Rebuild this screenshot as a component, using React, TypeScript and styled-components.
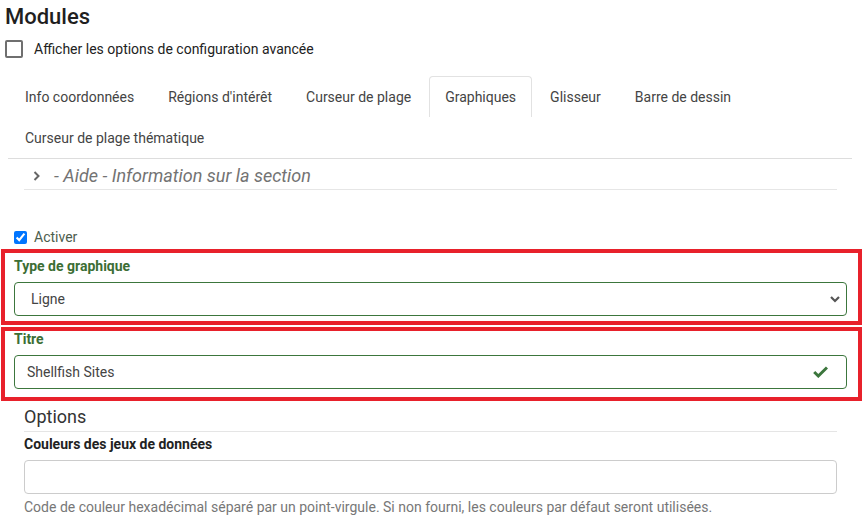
import React from "react";
import styled, { createGlobalStyle } from "styled-components";

const Global = createGlobalStyle`
  html, body { margin: 0; padding: 0; background: #fff; }
  body { font-family: Roboto, "Liberation Sans", Arial, sans-serif; font-size: 14px; color: #222; }
  * { box-sizing: border-box; }
`;

const Page = styled.div`
  width: 865px;
  display: flex;
  flex-direction: column;
`;

const Title = styled.h1`
  margin: 4px 0 0 5px;
  font-size: 22px;
  line-height: 26px;
  font-weight: 500;
  color: #1f1f1f;
`;

const CheckRow = styled.label`
  margin: 10px 0 0 5px;
  display: flex;
  align-items: center;
  gap: 11px;
  height: 18px;
  font-size: 14px;
  color: #222;
`;

const BoxCheck = styled.span`
  width: 18px;
  height: 18px;
  border: 2px solid #6f6f6f;
  border-radius: 2px;
  flex: none;
`;

const Nav = styled.div`
  margin: 18px 13px 0 8px;
  padding-left: 1px;
  display: flex;
  flex-wrap: wrap;
  border-bottom: 1px solid #ddd;
`;

const Tab = styled.div<{ $active?: boolean }>`
  height: 41px;
  padding: 0 15px;
  margin-right: 2px;
  display: flex;
  align-items: center;
  font-size: 14px;
  color: #444;
  border: 1px solid ${(p) => (p.$active ? "#e2e2e2" : "transparent")};
  border-bottom: none;
  border-radius: 4px 4px 0 0;
`;

const Section = styled.div`
  margin: 0 28px 0 24px;
`;

const Aide = styled.div`
  display: flex;
  align-items: center;
  gap: 14px;
  padding: 6px 0 2px 9px;
  border-bottom: 1px solid #e6e6e6;
  font-size: 18px;
  line-height: 22px;
  font-style: italic;
  color: #737373;
`;

const ActiveRow = styled.label`
  margin: 37px 0 0 14px;
  height: 20px;
  display: flex;
  align-items: center;
  gap: 7px;
  font-size: 14px;
  color: #4d5d4d;
`;

const NativeCheck = styled.input`
  margin: 0;
  width: 13px;
  height: 13px;
  accent-color: #0075ff;
`;

const RedBox = styled.div<{ $pt: number; $pb: number; $mt: number }>`
  margin: ${(p) => p.$mt}px 3px 0 1px;
  border: 4px solid #e8212b;
  padding: ${(p) => p.$pt}px 11px ${(p) => p.$pb}px 9px;
  display: flex;
  flex-direction: column;
`;

const GreenLabel = styled.div`
  font-size: 14px;
  line-height: 16px;
  font-weight: 700;
  color: #3c6e34;
  margin-bottom: 8px;
`;

const Field = styled.div<{ $tone: "success" | "plain" }>`
  height: 34px;
  border: 1px solid ${(p) => (p.$tone === "success" ? "#3c763d" : "#cccccc")};
  border-radius: 4px;
  display: flex;
  align-items: center;
  justify-content: space-between;
  font-size: 14px;
  color: #444;
  background: #fff;
`;

const FieldText = styled.span<{ $pl: number }>`
  padding-left: ${(p) => p.$pl}px;
`;

const IconSlot = styled.span<{ $pr: number }>`
  display: flex;
  align-items: center;
  padding-right: ${(p) => p.$pr}px;
`;

const OptionsTitle = styled.div`
  margin-top: 5px;
  padding-bottom: 3px;
  border-bottom: 1px solid #e5e5e5;
  font-size: 18px;
  line-height: 22px;
  color: #333;
`;

const BoldLabel = styled.div`
  margin: 2px 0 6px;
  font-size: 14px;
  line-height: 20px;
  font-weight: 700;
  color: #222;
`;

const Help = styled.div`
  margin-top: 3px;
  font-size: 14px;
  line-height: 20px;
  color: #777;
`;

const tabs = [
  "Info coordonnées",
  "Régions d'intérêt",
  "Curseur de plage",
  "Graphiques",
  "Glisseur",
  "Barre de dessin",
  "Curseur de plage thématique",
];

export default function App() {
  return (
    <Page>
      <Global />
      <Title>Modules</Title>
      <CheckRow>
        <BoxCheck />
        Afficher les options de configuration avancée
      </CheckRow>
      <Nav>
        {tabs.map((t) => (
          <Tab key={t} $active={t === "Graphiques"}>
            {t}
          </Tab>
        ))}
      </Nav>
      <Section>
        <Aide>
          <svg width="7" height="10" viewBox="0 0 7 10">
            <polyline points="1.5,1 5.5,5 1.5,9" fill="none" stroke="#666" strokeWidth="2" />
          </svg>
          - Aide - Information sur la section
        </Aide>
      </Section>
      <ActiveRow>
        <NativeCheck type="checkbox" checked readOnly />
        Activer
      </ActiveRow>
      <RedBox $mt={2} $pt={5} $pb={5}>
        <GreenLabel>Type de graphique</GreenLabel>
        <Field $tone="success">
          <FieldText $pl={16}>Ligne</FieldText>
          <IconSlot $pr={6}>
            <svg width="10" height="7" viewBox="0 0 10 7">
              <polyline points="1,1 5,5 9,1" fill="none" stroke="#555" strokeWidth="2.2" />
            </svg>
          </IconSlot>
        </Field>
      </RedBox>
      <RedBox $mt={2} $pt={0} $pb={8}>
        <GreenLabel>Titre</GreenLabel>
        <Field $tone="success">
          <FieldText $pl={12}>Shellfish Sites</FieldText>
          <IconSlot $pr={18}>
            <svg width="15" height="12" viewBox="0 0 15 12">
              <polyline points="1.2,6 5.3,10 14,1.5" fill="none" stroke="#3c763d" strokeWidth="3" />
            </svg>
          </IconSlot>
        </Field>
      </RedBox>
      <Section>
        <OptionsTitle>Options</OptionsTitle>
        <BoldLabel>Couleurs des jeux de données</BoldLabel>
        <Field $tone="plain" />
        <Help>
          Code de couleur hexadécimal séparé par un point-virgule. Si non fourni, les couleurs par défaut seront utilisées.
        </Help>
      </Section>
    </Page>
  );
}
